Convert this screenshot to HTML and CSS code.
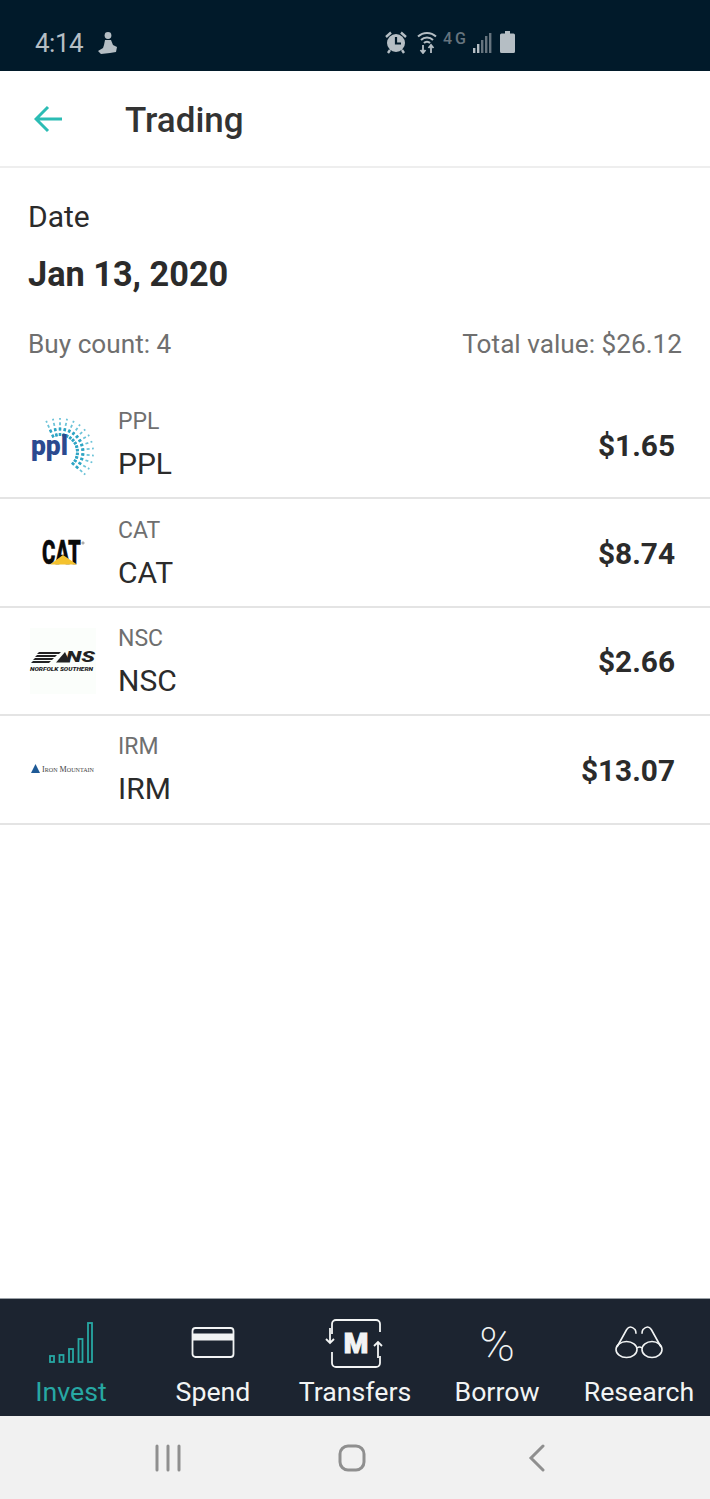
FILE: index.html
```html
<!DOCTYPE html>
<html lang="en">
<head>
  <meta charset="UTF-8" />
  <title>Trading</title>
  <link rel="stylesheet" href="styles.css">
</head>
<body>
<div class="screen">

  <!-- status bar -->
  <div class="status">
    <span class="clock">4:14</span>
    <svg class="st-app" width="22" height="24" viewBox="0 0 22 24">
      <circle cx="11" cy="4.500" r="3.400" fill="#b5bec4"/>
      <path d="M8 9h6l2 5 4 2-1 5-6 1-9 1-3-3 5-3 1-3z" fill="#b5bec4"/>
    </svg>
    <div class="st-icons">
      <svg width="24" height="24" viewBox="0 0 24 24">
        <circle cx="12" cy="13" r="9" fill="#b5bec4"/>
        <path d="M12 7v6.500h5" fill="none" stroke="#011a2a" stroke-width="2.200"/>
        <path d="M2 7l5-4.500M22 7l-5-4.500M6 20l-2 3M18 20l2 3" stroke="#b5bec4" stroke-width="2.400" fill="none"/>
      </svg>
      <svg class="st-wifi" width="20" height="24" viewBox="0 0 20 24">
        <path d="M1 6.500a13 13 0 0 1 18 0M4 10a8.500 8.500 0 0 1 12 0M7 13a4 4 0 0 1 6 0" fill="none" stroke="#b5bec4" stroke-width="2"/>
        <path d="M6 15v8M3.500 20l2.500 3 2.500-3M14 23v-8M11.500 18l2.500-3 2.500 3" fill="none" stroke="#b5bec4" stroke-width="1.800"/>
      </svg>
      <span class="st-net">4G</span>
      <svg class="st-signal" width="20" height="24" viewBox="0 0 20 24">
        <rect x="1" y="18" width="2.400" height="5" fill="#b5bec4"/>
        <rect x="5" y="14" width="2.400" height="9" fill="#b5bec4"/>
        <rect x="9" y="10" width="2.400" height="13" fill="#66747e"/>
        <rect x="13" y="6" width="2.400" height="17" fill="#66747e"/>
        <rect x="17" y="3" width="2.400" height="20" fill="#66747e"/>
      </svg>
      <svg class="st-batt" width="15" height="22" viewBox="0 0 15 22">
        <path d="M5 0h5v2.500h3.500a1.500 1.500 0 0 1 1.500 1.500v16.500a1.500 1.500 0 0 1-1.500 1.500h-12a1.500 1.500 0 0 1-1.500-1.500v-16.500a1.500 1.500 0 0 1 1.500-1.500h3.500z" fill="#b5bec4"/>
      </svg>
    </div>
  </div>

  <!-- header -->
  <div class="topbar">
    <svg class="back" width="30" height="28" viewBox="0 0 30 28">
      <path d="M28 14H3M14 2L2 14l12 12" fill="none" stroke="#2bbcb4" stroke-width="3"/>
    </svg>
    <h1>Trading</h1>
  </div>

  <div class="summary">
    <div class="date-label">Date</div>
    <div class="date-value">Jan 13, 2020</div>
    <div class="counts">
      <span>Buy count: 4</span>
      <span>Total value: $26.12</span>
    </div>
  </div>

  <div class="list">
    <div class="row">
      <div class="logo">
        <svg width="66" height="60" viewBox="0 0 66 60">
          <defs>
            <path id="rays" d="M23.500 23.400L16.200 6.900M26.700 22.400L22.900 4.700M30 22V4M33.300 22.400L37.100 4.700M36.500 23.400L43.800 6.900M39.400 25.100L50 10.500M41.900 27.300L55.300 15.300M43.900 30L59.400 21M45.200 33.100L62.300 27.500M45.900 36.300L63.800 34.400M45.900 39.700L63.800 41.600M45.200 42.900L62.300 48.500M43.900 46L59.400 55M41.900 48.700L55.300 60.700"/>
          </defs>
          <use href="#rays" class="rays-outer"/>
          <use href="#rays" class="rays-inner"/>
          <text class="ppl-mark" x="1" y="41" textLength="37" lengthAdjust="spacingAndGlyphs">ppl</text>
        </svg>
      </div>
      <div class="names">
        <div class="ticker">PPL</div>
        <div class="name">PPL</div>
      </div>
      <div class="price">$1.65</div>
    </div>

    <div class="row">
      <div class="logo">
        <svg width="66" height="48" viewBox="0 -4 66 48">
          <text class="cat-mark" x="12" y="31" textLength="39" lengthAdjust="spacingAndGlyphs">CAT</text>
          <path d="M20 31.500L33 22l14 9.500z" fill="#f4c22e"/>
          <circle cx="53" cy="10" r="1.100" fill="none" stroke="#555" stroke-width="0.600"/>
        </svg>
      </div>
      <div class="names">
        <div class="ticker">CAT</div>
        <div class="name">CAT</div>
      </div>
      <div class="price">$8.74</div>
    </div>

    <div class="row">
      <div class="logo logo-nsc">
        <svg width="66" height="30" viewBox="0 0 66 30">
          <path d="M9 6h22l-2 2H7zM7 9h20l-2 2H5zM5 12h19l-2 2H3zM3 15h18l-2 2H1z" fill="#222"/>
          <path d="M26 16.500L35 6l5 10.500z" fill="#222"/>
          <text class="ns-mark" x="36" y="16" textLength="29" lengthAdjust="spacingAndGlyphs">NS</text>
          <text class="ns-sub" x="0" y="24.500" textLength="63" lengthAdjust="spacingAndGlyphs">NORFOLK SOUTHERN</text>
        </svg>
      </div>
      <div class="names">
        <div class="ticker">NSC</div>
        <div class="name">NSC</div>
      </div>
      <div class="price">$2.66</div>
    </div>

    <div class="row">
      <div class="logo">
        <svg width="66" height="20" viewBox="0 0 66 20">
          <path d="M1 14L5.500 5 10 14z" fill="#1e5a96"/>
          <text class="irm-mark" x="12" y="12.500" textLength="52" lengthAdjust="spacingAndGlyphs">Iron Mountain</text>
        </svg>
      </div>
      <div class="names">
        <div class="ticker">IRM</div>
        <div class="name">IRM</div>
      </div>
      <div class="price">$13.07</div>
    </div>
  </div>

  <div class="spacer"></div>

  <!-- bottom tabs -->
  <div class="tabs">
    <div class="tab active">
      <div class="tab-icon">
        <svg width="46" height="44" viewBox="0 0 46 44">
          <g fill="none" stroke="#27a8a4" stroke-width="1.800">
            <rect x="2" y="35" width="4" height="6"/>
            <rect x="11.500" y="34" width="4" height="7"/>
            <rect x="21" y="28" width="4" height="13"/>
            <rect x="30.500" y="18" width="4" height="23"/>
            <rect x="40" y="2" width="4" height="39"/>
          </g>
        </svg>
      </div>
      <span>Invest</span>
    </div>
    <div class="tab">
      <div class="tab-icon">
        <svg width="46" height="44" viewBox="0 0 46 44">
          <rect x="2.500" y="7" width="41" height="29" rx="3" fill="none" stroke="#f2f4f4" stroke-width="1.800"/>
          <rect x="2.500" y="12.500" width="41" height="7" fill="#f2f4f4"/>
        </svg>
      </div>
      <span>Spend</span>
    </div>
    <div class="tab">
      <div class="tab-icon">
        <svg width="60" height="50" viewBox="0 0 60 50">
          <g fill="none" stroke="#f2f4f4" stroke-width="1.800">
            <path d="M7 16V6a4 4 0 0 1 4-4h40a4 4 0 0 1 4 4v8"/>
            <path d="M7 34v11a4 4 0 0 0 4 4h40a4 4 0 0 0 4-4V38"/>
            <path d="M5 10v15M1 21l4 4 4-4"/>
            <path d="M53 40V24M49 28l4-4 4 4"/>
          </g>
          <text class="m-mark" x="31" y="35">M</text>
        </svg>
      </div>
      <span>Transfers</span>
    </div>
    <div class="tab">
      <div class="tab-icon percent">%</div>
      <span>Borrow</span>
    </div>
    <div class="tab">
      <div class="tab-icon">
        <svg width="48" height="44" viewBox="0 0 48 44">
          <g fill="none" stroke="#f2f4f4" stroke-width="1.600">
            <ellipse cx="11.500" cy="28.500" rx="10.500" ry="8"/>
            <ellipse cx="37" cy="28.500" rx="10" ry="8"/>
            <path d="M22 27q2.500-2 5 0"/>
            <path d="M2 26L11.700 8.500Q15 3.500 20 8.500Q21 10 21 12.800"/>
            <path d="M46 26L36.300 8.500Q33 3.500 28 8.500Q27 10 27 12.800"/>
          </g>
        </svg>
      </div>
      <span>Research</span>
    </div>
  </div>

  <!-- android nav -->
  <div class="sysnav">
    <svg width="28" height="28" viewBox="0 0 28 28">
      <path d="M3 2v24M14 2v24M25 2v24" stroke="#8f8f8f" stroke-width="3" stroke-linecap="round"/>
    </svg>
    <svg width="28" height="28" viewBox="0 0 28 28">
      <rect x="2" y="2" width="24" height="24" rx="8" fill="none" stroke="#8f8f8f" stroke-width="3"/>
    </svg>
    <svg width="18" height="28" viewBox="0 0 18 28">
      <path d="M15 2L3 14l12 12" fill="none" stroke="#8f8f8f" stroke-width="3" stroke-linecap="round"/>
    </svg>
  </div>

</div>
</body>
</html>
```

FILE: styles.css
```css
body {
  margin: 0;
  background-color: #fff;
  font-family: Roboto, "Liberation Sans", sans-serif;
  color: #2b2b2b;
}
.screen {
  width: 710px;
  height: 1499px;
  display: flex;
  flex-direction: column;
  overflow: hidden;
}

.status {
  height: 71px;
  flex: none;
  box-sizing: border-box;
  padding: 25px 195px 0 35px;
  background-color: #011a2a;
  display: flex;
  align-items: flex-start;
  color: #b5bec4;
}
.clock {
  font-size: 26px;
  line-height: 36px;
  letter-spacing: -0.5px;
}
.st-app {
  margin: 6px 0 0 14px;
}
.st-icons {
  margin-left: auto;
  margin-top: 5px;
  display: flex;
  gap: 6px;
  align-items: flex-start;
}
.st-wifi {
  margin-left: 3px;
}
.st-net {
  width: 25px;
  font-size: 16px;
  line-height: 15px;
  font-weight: 500;
  color: #66747e;
  letter-spacing: 3px;
  margin-top: 1px;
}
.st-signal {
  margin-left: -2px;
}
.st-batt {
  margin-left: 2px;
  margin-top: 1px;
}

.topbar {
  height: 97px;
  flex: none;
  box-sizing: border-box;
  padding-left: 34px;
  border-bottom: 2px solid #eeeeee;
  display: flex;
  align-items: center;
}
.topbar h1 {
  margin: 3px 0 0 61px;
  font-size: 35px;
  font-weight: 500;
  color: #333;
}

.summary {
  padding: 31px 28px 0;
}
.date-label {
  font-size: 30px;
  line-height: 36px;
}
.date-value {
  margin-top: 19px;
  font-size: 34.300px;
  line-height: 40px;
  font-weight: 700;
}
.counts {
  margin-top: 32px;
  display: flex;
  justify-content: space-between;
  font-size: 26.200px;
  line-height: 36px;
  color: #6f6f6f;
}

.list {
  margin-top: 29px;
}
.row {
  height: 108.4px;
  box-sizing: border-box;
  padding: 0 35px 0 30px;
  border-bottom: 2px solid #e4e4e4;
  display: flex;
  align-items: center;
}
.logo {
  width: 66px;
  height: 66px;
  flex: none;
  margin-right: 22px;
  display: flex;
  align-items: center;
  justify-content: center;
}
.logo svg {
  overflow: visible;
}
.logo-nsc {
  background-color: #fbfefb;
}
.names {
  flex: 1;
}
.ticker {
  margin-top: 1px;
  font-size: 23px;
  line-height: 30px;
  color: #6f6f6f;
}
.name {
  margin-top: 9px;
  font-size: 30px;
  line-height: 36px;
}
.price {
  font-size: 29.800px;
  font-weight: 700;
  margin-top: 2px;
}

.rays-outer {
  fill: none;
  stroke: #6cc3d8;
  stroke-width: 1.800;
  stroke-dasharray: 3 2.400;
}
.rays-inner {
  fill: none;
  stroke: #2fa5c4;
  stroke-width: 2.600;
  stroke-dasharray: 3 2.400 3 100;
}
.ppl-mark {
  font-size: 28px;
  font-weight: 900;
  fill: #2b4a8f;
}
.cat-mark {
  font-size: 33px;
  font-weight: 900;
  fill: #0a0a0a;
  stroke: #0a0a0a;
  stroke-width: 0.400;
}
.ns-mark {
  font-size: 14.500px;
  font-weight: 900;
  font-style: italic;
  fill: #222;
}
.ns-sub {
  font-size: 5.500px;
  font-weight: 900;
  font-style: italic;
  fill: #222;
}
.irm-mark {
  font-family: "Liberation Serif", serif;
  font-variant: small-caps;
  font-size: 8px;
  fill: #444;
}

.spacer {
  flex: 1;
}

.tabs {
  height: 118px;
  flex: none;
  box-sizing: border-box;
  border-top: 1px solid #9aa0a6;
  background-color: #1c2430;
  display: grid;
  grid-template-columns: repeat(5, 142px);
  color: #f2f4f4;
}
.tab {
  display: flex;
  flex-direction: column;
  align-items: center;
  font-size: 26.700px;
  line-height: 32px;
}
.tab-icon {
  height: 77px;
  padding-top: 10px;
  box-sizing: border-box;
  display: flex;
  align-items: center;
  justify-content: center;
  white-space: nowrap;
}
.tab.active {
  color: #27a8a4;
}
.tab-icon.percent {
  padding-top: 14px;
  font-size: 48px;
  font-weight: 200;
  line-height: 60px;
}
.m-mark {
  font-size: 28px;
  font-weight: 900;
  fill: #f2f4f4;
  stroke: #f2f4f4;
  stroke-width: 1;
  text-anchor: middle;
}

.sysnav {
  height: 83px;
  flex: none;
  background-color: #f1f1f1;
  display: flex;
  align-items: center;
}
.sysnav svg:nth-child(1) {
  margin-left: 154px;
}
.sysnav svg:nth-child(2) {
  margin-left: 156px;
}
.sysnav svg:nth-child(3) {
  margin-left: 162px;
}
```
